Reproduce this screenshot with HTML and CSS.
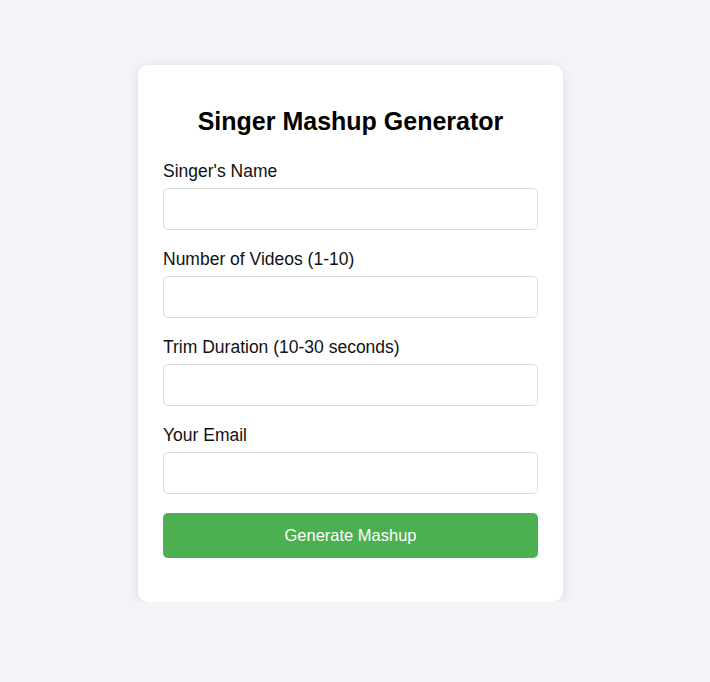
FILE: index.html
```html
<!DOCTYPE html>
<html>
<head>
<meta charset="utf-8">
<link rel="stylesheet" href="styles.css">
</head>
<body>
<div class="card">
  <h2 class="title">Singer Mashup Generator</h2>
  <form class="form">
    <label class="label">Singer's Name</label>
    <input class="input" type="text">
    <label class="label">Number of Videos (1-10)</label>
    <input class="input" type="number">
    <label class="label">Trim Duration (10-30 seconds)</label>
    <input class="input" type="number">
    <label class="label">Your Email</label>
    <input class="input input-last" type="email">
    <button class="btn" type="button">Generate Mashup</button>
  </form>
</div>
</body>
</html>
```
FILE: styles.css
```css
html, body {
  margin: 0;
  padding: 0;
  background: #f4f4f8;
  font-family: "Liberation Sans", Arial, sans-serif;
}
body {
  padding-top: 65px;
}
.card {
  width: 425px;
  box-sizing: border-box;
  margin-left: 138px;
  background: #fff;
  border-radius: 10px;
  box-shadow: 0 2px 12px rgba(0, 0, 0, 0.1);
  padding: 42px 25px 44px;
}
.title {
  margin: 0 0 27px;
  font-size: 25px;
  line-height: 28px;
  font-weight: bold;
  text-align: center;
  color: #000;
}
.form {
  display: flex;
  flex-direction: column;
}
.label {
  display: block;
  font-size: 17.5px;
  line-height: 18px;
  color: #111;
  margin-bottom: 8px;
}
.input {
  box-sizing: border-box;
  height: 42px;
  width: 100%;
  border: 1px solid #dcdcdc;
  border-radius: 5px;
  margin: 0 0 20px;
  padding: 0 10px;
  font-size: 16px;
  background: #fff;
}
.input-last {
  margin-bottom: 19px;
}
.btn {
  height: 45px;
  width: 100%;
  background: #4caf50;
  color: #fff;
  border: none;
  border-radius: 5px;
  font-family: "Liberation Sans", Arial, sans-serif;
  font-size: 16.5px;
}
```
